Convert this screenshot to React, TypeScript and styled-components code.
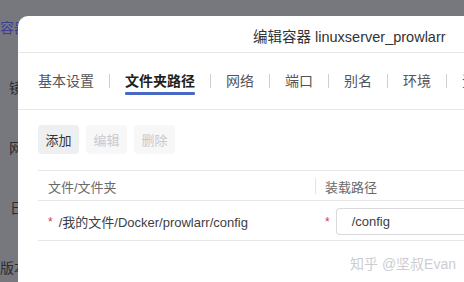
import React from "react";
import styled, { createGlobalStyle } from "styled-components";

const Global = createGlobalStyle`
  html, body { margin: 0; padding: 0; }
  body {
    background: #77787d;
    font-family: "Liberation Sans", "Noto Sans CJK SC", sans-serif;
    overflow: hidden;
  }
`;

const Page = styled.div`
  position: relative;
  width: 464px;
  height: 282px;
  overflow: hidden;
  display: flex;
`;

const Sidebar = styled.nav`
  display: flex;
  flex-direction: column;
  margin-top: -2px;
  width: 40px;
`;

const SideItem = styled.div<{ $x: number; $active?: boolean }>`
  height: 60px;
  line-height: 60px;
  font-size: 14px;
  white-space: nowrap;
  padding-left: ${(p) => p.$x}px;
  color: ${(p) => (p.$active ? "#3a4196" : "#2b2c31")};
`;

const Modal = styled.section`
  position: absolute;
  left: 18px;
  top: 16px;
  width: 520px;
  height: 300px;
  background: #ffffff;
  border-radius: 10px 0 0 0;
  display: flex;
  flex-direction: column;
`;

const Header = styled.header`
  height: 37px;
  border-bottom: 1px solid #e6e6e8;
  display: flex;
  align-items: center;
  padding-left: 235px;
  padding-top: 2px;
  box-sizing: border-box;
  font-size: 14.5px;
  color: #333;
  white-space: nowrap;
`;

const Tabs = styled.div`
  display: flex;
  align-items: flex-start;
  padding: 18px 0 0 20px;
  height: 57px;
  box-sizing: border-box;
  border-bottom: 1px solid #e6e6e8;
`;

const Tab = styled.div<{ $active?: boolean }>`
  display: flex;
  flex-direction: column;
  font-size: 14px;
  line-height: 20px;
  white-space: nowrap;
  color: ${(p) => (p.$active ? "#1f1f22" : "#555559")};
  font-weight: ${(p) => (p.$active ? 600 : 400)};
  &::after {
    content: "";
    display: block;
    height: 3px;
    margin-top: 1px;
    border-radius: 1px;
    background: ${(p) => (p.$active ? "#4a69c4" : "transparent")};
  }
`;

const Sep = styled.div`
  width: 1px;
  height: 14px;
  margin: 3px 15px 0;
  background: #cfcfd3;
  flex: none;
`;

const Body = styled.div`
  padding: 15px 0 0 20px;
  display: flex;
  flex-direction: column;
`;

const Toolbar = styled.div`
  display: flex;
  gap: 7px;
`;

const Button = styled.button<{ $disabled?: boolean }>`
  height: 29px;
  width: 41px;
  padding: 0;
  border: none;
  border-radius: 4px;
  font-family: inherit;
  font-size: 13px;
  background: ${(p) => (p.$disabled ? "#f7f7f8" : "#eeeff1")};
  color: ${(p) => (p.$disabled ? "#c9c9cd" : "#333")};
`;

const Table = styled.div`
  margin-top: 16px;
  border-top: 1px solid #e6e6e8;
  display: grid;
  grid-template-columns: 277px 1fr;
`;

const HeadCell = styled.div<{ $divider?: boolean }>`
  height: 28px;
  display: flex;
  align-items: center;
  padding-left: 10px;
  padding-top: 1px;
  font-size: 13px;
  color: #69696d;
  border-bottom: 1px solid #e6e6e8;
  position: relative;
  ${(p) =>
    p.$divider &&
    `&::before { content: ""; position: absolute; left: 0; top: 7px; width: 1px; height: 16px; background: #e3e3e6; }`}
`;

const Cell = styled.div`
  height: 40px;
  display: flex;
  align-items: center;
  padding-left: 10px;
  padding-top: 1px;
  box-sizing: border-box;
  font-size: 13px;
  color: #404044;
  border-bottom: 1px solid #e6e6e8;
  white-space: nowrap;
`;

const Star = styled.span`
  color: #d2395e;
  font-size: 12px;
  margin-right: 6px;
  margin-top: 2px;
`;

const Input = styled.div`
  flex: 1;
  height: 27px;
  box-sizing: border-box;
  border: 1px solid #dadade;
  border-right: none;
  border-radius: 4px 0 0 4px;
  display: flex;
  align-items: center;
  padding-left: 15px;
  font-size: 13px;
  color: #404044;
`;

const Watermark = styled.div`
  position: absolute;
  left: 350px;
  top: 253px;
  font-size: 14px;
  color: #cdcdd1;
  white-space: nowrap;
  text-shadow: 0 0 2px #fff;
`;

export default function App() {
  const tabs = ["基本设置", "文件夹路径", "网络", "端口", "别名", "环境", "资源"];
  return (
    <>
      <Global />
      <Page>
        <Sidebar>
          <SideItem $x={-6} $active>容器</SideItem>
          <SideItem $x={9}>镜像</SideItem>
          <SideItem $x={9}>网络</SideItem>
          <SideItem $x={10}>日志</SideItem>
          <SideItem $x={0}>版本</SideItem>
        </Sidebar>
        <Modal>
          <Header>编辑容器 linuxserver_prowlarr</Header>
          <Tabs>
            {tabs.map((t, i) => (
              <React.Fragment key={t}>
                {i > 0 && <Sep />}
                <Tab $active={i === 1}>{t}</Tab>
              </React.Fragment>
            ))}
          </Tabs>
          <Body>
            <Toolbar>
              <Button>添加</Button>
              <Button $disabled>编辑</Button>
              <Button $disabled>删除</Button>
            </Toolbar>
            <Table>
              <HeadCell>文件/文件夹</HeadCell>
              <HeadCell $divider>装载路径</HeadCell>
              <Cell>
                <Star>*</Star>/我的文件/Docker/prowlarr/config
              </Cell>
              <Cell>
                <Star>*</Star>
                <Input>/config</Input>
              </Cell>
            </Table>
          </Body>
        </Modal>
        <Watermark>知乎 @坚叔Evan</Watermark>
      </Page>
    </>
  );
}
